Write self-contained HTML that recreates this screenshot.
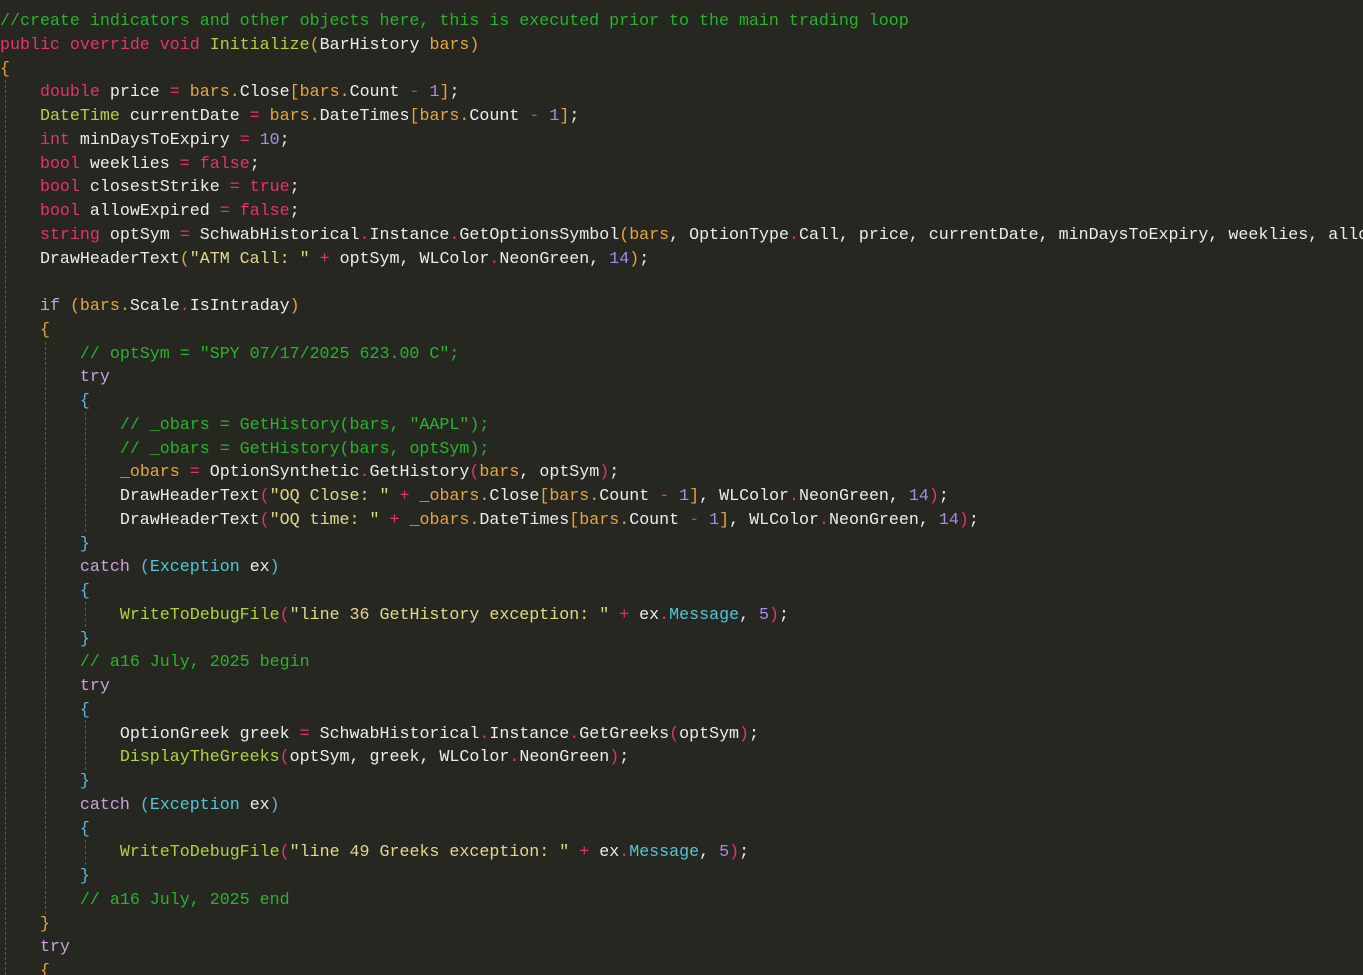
<!DOCTYPE html>
<html><head><meta charset="utf-8"><style>
html,body{margin:0;padding:0;}
body{width:1363px;height:975px;background:#272722;overflow:hidden;position:relative;}
pre{margin:0;position:absolute;left:0;top:9px;width:1363px;height:966px;overflow:hidden;font-family:"Liberation Mono",monospace;font-size:16.65px;line-height:23.75px;color:#ececec;white-space:pre;}
.k{color:#e8306f}.t{color:#aed43a}.c{color:#c9a2dc}.o{color:#e6a53c}.s{color:#e3d888}.n{color:#a88aec}.m{color:#25b52a}.b{color:#5ab8de}.p{color:#e8306f}.cy{color:#4fc6d6}
.g{position:absolute;width:0;border-left:1px dashed #5a5a55;}
</style></head><body>
<div class="g" style="left:5px;top:80px;height:895px"></div>
<div class="g" style="left:45px;top:342px;height:572px"></div>
<div class="g" style="left:85px;top:412px;height:120px"></div>
<div class="g" style="left:85px;top:602px;height:25px"></div>
<div class="g" style="left:85px;top:720px;height:50px"></div>
<div class="g" style="left:85px;top:840px;height:25px"></div>
<pre><span class="m">//create indicators and other objects here, this is executed prior to the main trading loop</span>
<span class="k">public override void</span> <span class="t">Initialize</span><span class="o">(</span>BarHistory <span class="o">bars)</span>
<span class="o">{</span>
    <span class="k">double</span> price <span class="p">=</span> <span class="o">bars.</span>Close<span class="o">[bars.</span>Count <span class="p">-</span> <span class="n">1</span><span class="o">]</span>;
    <span class="t">DateTime</span> currentDate <span class="p">=</span> <span class="o">bars.</span>DateTimes<span class="o">[bars.</span>Count <span class="p">-</span> <span class="n">1</span><span class="o">]</span>;
    <span class="k">int</span> minDaysToExpiry <span class="p">=</span> <span class="n">10</span>;
    <span class="k">bool</span> weeklies <span class="p">=</span> <span class="k">false</span>;
    <span class="k">bool</span> closestStrike <span class="p">=</span> <span class="k">true</span>;
    <span class="k">bool</span> allowExpired <span class="p">=</span> <span class="k">false</span>;
    <span class="k">string</span> optSym <span class="p">=</span> SchwabHistorical<span class="p">.</span>Instance<span class="p">.</span>GetOptionsSymbol<span class="o">(bars</span>, OptionType<span class="p">.</span>Call, price, currentDate, minDaysToExpiry, weeklies, allo
    DrawHeaderText<span class="o">(</span><span class="s">"ATM Call: "</span> <span class="p">+</span> optSym, WLColor<span class="p">.</span>NeonGreen, <span class="n">14</span><span class="o">)</span>;

    <span class="c">if</span> <span class="o">(bars.</span>Scale<span class="p">.</span>IsIntraday<span class="o">)</span>
    <span class="o">{</span>
        <span class="m">// optSym = "SPY 07/17/2025 623.00 C";</span>
        <span class="c">try</span>
        <span class="b">{</span>
            <span class="m">// _obars = GetHistory(bars, "AAPL");</span>
            <span class="m">// _obars = GetHistory(bars, optSym);</span>
            <span class="o">_obars</span> <span class="p">=</span> OptionSynthetic<span class="p">.</span>GetHistory<span class="p">(</span><span class="o">bars</span>, optSym<span class="p">)</span>;
            DrawHeaderText<span class="p">(</span><span class="s">"OQ Close: "</span> <span class="p">+</span> <span class="o">_obars.</span>Close<span class="o">[bars.</span>Count <span class="p">-</span> <span class="n">1</span><span class="o">]</span>, WLColor<span class="p">.</span>NeonGreen, <span class="n">14</span><span class="p">)</span>;
            DrawHeaderText<span class="p">(</span><span class="s">"OQ time: "</span> <span class="p">+</span> <span class="o">_obars.</span>DateTimes<span class="o">[bars.</span>Count <span class="p">-</span> <span class="n">1</span><span class="o">]</span>, WLColor<span class="p">.</span>NeonGreen, <span class="n">14</span><span class="p">)</span>;
        <span class="b">}</span>
        <span class="c">catch</span> <span class="b">(</span><span class="cy">Exception</span> ex<span class="b">)</span>
        <span class="b">{</span>
            <span class="t">WriteToDebugFile</span><span class="p">(</span><span class="s">"line 36 GetHistory exception: "</span> <span class="p">+</span> ex<span class="p">.</span><span class="cy">Message</span>, <span class="n">5</span><span class="p">)</span>;
        <span class="b">}</span>
        <span class="m">// a16 July, 2025 begin</span>
        <span class="c">try</span>
        <span class="b">{</span>
            OptionGreek greek <span class="p">=</span> SchwabHistorical<span class="p">.</span>Instance<span class="p">.</span>GetGreeks<span class="p">(</span>optSym<span class="p">)</span>;
            <span class="t">DisplayTheGreeks</span><span class="p">(</span>optSym, greek, WLColor<span class="p">.</span>NeonGreen<span class="p">)</span>;
        <span class="b">}</span>
        <span class="c">catch</span> <span class="b">(</span><span class="cy">Exception</span> ex<span class="b">)</span>
        <span class="b">{</span>
            <span class="t">WriteToDebugFile</span><span class="p">(</span><span class="s">"line 49 Greeks exception: "</span> <span class="p">+</span> ex<span class="p">.</span><span class="cy">Message</span>, <span class="n">5</span><span class="p">)</span>;
        <span class="b">}</span>
        <span class="m">// a16 July, 2025 end</span>
    <span class="o">}</span>
    <span class="c">try</span>
    <span class="o">{</span></pre>
</body></html>
